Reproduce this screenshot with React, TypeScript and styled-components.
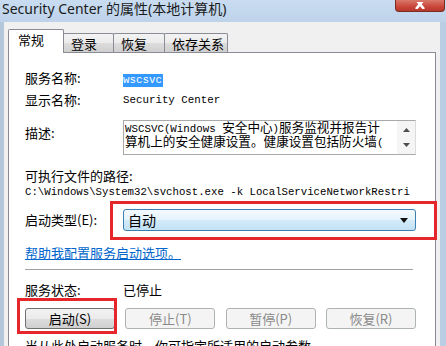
import styled, {createGlobalStyle} from 'styled-components';

const UI = `"Noto Sans CJK SC", "Noto Sans", sans-serif`;
const MONO = `"Liberation Mono", "Noto Sans CJK SC", monospace`;

const GlobalStyle = createGlobalStyle`
  html, body {
    margin: 0;
    padding: 0;
  }
  body {
    width: 446px;
    height: 346px;
    overflow: hidden;
    background: #bfd3ea;
  }
`;

const tabs = [
    {label: '常规', width: 56},
    {label: '登录', width: 51},
    {label: '恢复', width: 52},
    {label: '依存关系', width: 64},
];

const actions = ['启动(S)', '停止(T)', '暂停(P)', '恢复(R)'];


export default function App() {
    return (
        <Window>
            <GlobalStyle />

            <TitleBar>
                <TitleText>Security Center 的属性(本地计算机)</TitleText>
                <CloseButton>
                    <svg width="14" height="7" viewBox="0 0 14 7">
                        <path d="M1 -5 L11 7 M13 -5 L3 7" stroke="#fff" strokeWidth="2.6" fill="none" />
                    </svg>
                </CloseButton>
            </TitleBar>

            <Client>
                <TabStrip>
                    {tabs.map((t, idx) => (
                        <Tab key={t.label} $active={idx === 0} $w={t.width}>{t.label}</Tab>
                    ))}
                </TabStrip>

                <Panel>
                    <FieldRow $mt={0}>
                        <Label>服务名称:</Label>
                        <div><Selected>wscsvc</Selected></div>
                    </FieldRow>

                    <FieldRow $mt={0}>
                        <Label>显示名称:</Label>
                        <Mono>Security Center</Mono>
                    </FieldRow>

                    <FieldRow $mt={9} $top>
                        <Label $pt={5}>描述:</Label>
                        <DescBox>
                            <DescText>
                                <DescLine>WSCSVC(Windows <Wide>安全中心</Wide>)<Wide>服务监视并报告计</Wide></DescLine>
                                <DescLine><Wide>算机上的安全健康设置。健康设置包括防火墙</Wide>(</DescLine>
                            </DescText>
                            <ScrollBar>
                                <svg width="7" height="4" viewBox="0 0 7 4"><path d="M0 4 L3.5 0 L7 4 Z" fill="#4d4d4d" /></svg>
                                <svg width="7" height="4" viewBox="0 0 7 4"><path d="M0 0 L3.5 4 L7 0 Z" fill="#4d4d4d" /></svg>
                            </ScrollBar>
                        </DescBox>
                    </FieldRow>

                    <TextLine $mt={12}>可执行文件的路径:</TextLine>
                    <PathText>C:\Windows\System32\svchost.exe -k LocalServiceNetworkRestri</PathText>

                    <FieldRow $mt={8}>
                        <Label>启动类型(E):</Label>
                        <Combo>
                            <span>自动</span>
                            <svg width="8" height="5" viewBox="0 0 8 5"><path d="M0 0 L8 0 L4 5 Z" fill="#111" /></svg>
                        </Combo>
                    </FieldRow>

                    <Link $mt={14}>帮助我配置服务启动选项。</Link>

                    <Separator />

                    <FieldRow $mt={11} $h={16}>
                        <Label>服务状态:</Label>
                        <Label>已停止</Label>
                    </FieldRow>

                    <ButtonRow>
                        {actions.map((a, idx) => (
                            <ActionButton key={a} $disabled={idx > 0} $marked={idx === 0}>{a}</ActionButton>
                        ))}
                    </ButtonRow>

                    <TextLine $mt={8}>当从此处启动服务时，你可指定所适用的启动参数。</TextLine>
                </Panel>
            </Client>
        </Window>
    );
}



const Window = styled.div`
  width: 446px;
  height: 346px;
  display: flex;
  flex-direction: column;
  overflow: hidden;
  background: linear-gradient(90deg, #b4c6da 0%, #c6d9ee 50%, #b9cde3 100%);
`;

const TitleBar = styled.div`
  height: 22px;
  flex: none;
  display: flex;
  align-items: flex-start;
  background: linear-gradient(#c9dcf1, #bed3ea);
`;

const TitleText = styled.div`
  padding: 0 0 0 2px;
  font-family: "Noto Sans", "Noto Sans CJK SC", sans-serif;
  font-size: 14px;
  line-height: 18px;
  color: #1b1b1b;
  white-space: nowrap;
`;

const CloseButton = styled.div`
  margin-left: auto;
  margin-right: 1px;
  width: 50px;
  height: 12px;
  box-sizing: border-box;
  border: 1px solid #7b2b22;
  border-top: none;
  border-radius: 0 0 4px 4px;
  background: linear-gradient(#d9796a, #c9473a 60%, #b6392c);
  display: flex;
  justify-content: center;
  align-items: flex-end;
  padding-bottom: 2px;
`;

const Client = styled.div`
  flex: 1;
  min-height: 0;
  margin: 0 6px 0 4px;
  padding: 7px 4px 0 4px;
  background: #f0f0f0;
  display: flex;
  flex-direction: column;
`;

const TabStrip = styled.div`
  height: 23px;
  flex: none;
  display: flex;
  align-items: flex-end;
`;

const Tab = styled.div<{ $active?: boolean; $w: number }>`
  width: ${p => p.$w}px;
  height: ${p => (p.$active ? 24 : 19)}px;
  box-sizing: border-box;
  margin-bottom: ${p => (p.$active ? -1 : 0)}px;
  margin-left: ${p => (p.$active ? 0 : -1)}px;
  padding: 0 0 ${p => (p.$active ? 4 : 0)}px ${p => (p.$active ? 9 : 7)}px;
  border: 1px solid #898c95;
  border-bottom: none;
  border-radius: 2px 2px 0 0;
  background: ${p => (p.$active ? '#fff' : 'linear-gradient(#f3f3f3, #ebebeb 50%, #dddddd 51%, #cfcfcf)')};
  position: relative;
  z-index: ${p => (p.$active ? 2 : 1)};
  display: flex;
  align-items: center;
  font-family: ${UI};
  font-size: 13px;
  color: #000;
  white-space: nowrap;
`;

const Panel = styled.div`
  flex: 1;
  min-height: 0;
  background: #fff;
  border: 1px solid #898c95;
  border-bottom: none;
  padding: 14px 19px 0 16px;
  display: flex;
  flex-direction: column;

  & > * {
    flex: none;
  }
`;

const FieldRow = styled.div<{ $mt: number; $top?: boolean; $h?: number }>`
  display: grid;
  grid-template-columns: 98px 1fr;
  align-items: ${p => (p.$top ? 'start' : 'center')};
  min-height: ${p => p.$h ?? 22}px;
  margin-top: ${p => p.$mt}px;
`;

const Label = styled.div<{ $pt?: number }>`
  padding-top: ${p => p.$pt ?? 0}px;
  font-family: ${UI};
  font-size: 13px;
  line-height: 16px;
  color: #000;
  white-space: nowrap;
`;

const Mono = styled.div`
  font-family: ${MONO};
  font-size: 10.8px;
  line-height: 14px;
  color: #000;
  white-space: nowrap;
`;

const Selected = styled.span`
  display: inline-block;
  background: #3399ff;
  color: #fff;
  font-family: ${MONO};
  font-size: 10.8px;
  line-height: 13px;
  padding: 0 1px 0 0;
`;

const DescBox = styled.div`
  height: 35px;
  box-sizing: border-box;
  border: 1px solid #a9a9a9;
  border-right-color: #dcdcdc;
  background: #fff;
  display: flex;
`;

const DescText = styled.div`
  flex: 1;
  min-width: 0;
  overflow: hidden;
  padding-left: 1px;
  font-family: ${MONO};
  font-size: 10.8px;
  color: #000;
`;

const DescLine = styled.div`
  height: 14px;
  line-height: 14px;
  white-space: nowrap;
`;

const Wide = styled.span`
  font-family: ${UI};
  font-size: 12.6px;
  line-height: 1;
`;

const ScrollBar = styled.div`
  width: 18px;
  flex: none;
  background: #f5f5f5;
  display: flex;
  flex-direction: column;
  align-items: center;
  justify-content: space-between;
  padding: 7px 0 7px;
  box-sizing: border-box;
`;

const TextLine = styled.div<{ $mt: number }>`
  margin-top: ${p => p.$mt}px;
  font-family: ${UI};
  font-size: 13px;
  line-height: 17px;
  color: #000;
  white-space: nowrap;
`;

const PathText = styled.div`
  font-family: ${MONO};
  font-size: 10.7px;
  line-height: 17px;
  color: #000;
  white-space: nowrap;
  overflow: hidden;
`;

const Combo = styled.div`
  position: relative;
  height: 22px;
  box-sizing: border-box;
  border: 1px solid #3c7fb1;
  border-radius: 3px;
  background: linear-gradient(#f4fafe, #e4f3fc 50%, #d3ebf9 51%, #c2e2f6);
  display: flex;
  align-items: center;
  justify-content: space-between;
  padding: 0 7px 0 4px;
  font-family: ${UI};
  font-size: 14px;
  color: #000;

  &::after {
    content: '';
    position: absolute;
    top: -9px;
    bottom: -10px;
    left: -14px;
    right: -22px;
    border: 3px solid #e5262a;
  }
`;

const Link = styled.div<{ $mt: number }>`
  margin-top: ${p => p.$mt}px;
  font-family: ${UI};
  font-size: 13px;
  line-height: 16px;
  color: #0066cc;
  text-decoration: underline;
  white-space: nowrap;
`;

const Separator = styled.div`
  margin: 8px 3px 0 0;
  height: 1px;
  background: #a0a0a0;
  border-bottom: 1px solid #fff;
`;

const ButtonRow = styled.div`
  margin-top: 10px;
  display: flex;
  justify-content: space-between;
`;

const ActionButton = styled.div<{ $disabled?: boolean; $marked?: boolean }>`
  position: relative;
  width: 90px;
  height: 21px;
  box-sizing: border-box;
  border: 1px solid ${p => (p.$disabled ? '#adb2b5' : '#707070')};
  border-radius: 3px;
  background: ${p => (p.$disabled ? '#f4f4f4' : 'linear-gradient(#f2f2f2, #ebebeb 50%, #dddddd 51%, #cfcfcf)')};
  display: flex;
  align-items: center;
  justify-content: center;
  font-family: ${UI};
  font-size: 13px;
  color: ${p => (p.$disabled ? '#8a8a8a' : '#000')};

  &::after {
    content: '';
    display: ${p => (p.$marked ? 'block' : 'none')};
    position: absolute;
    top: -11px;
    bottom: -6px;
    left: -9px;
    right: -3px;
    border: 3px solid #e5262a;
  }
`;
